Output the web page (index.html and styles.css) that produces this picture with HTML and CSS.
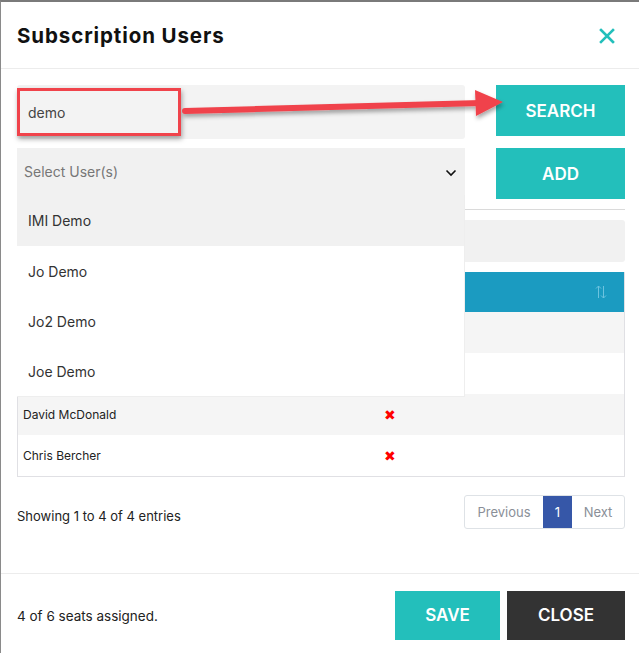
FILE: index.html
```html
<!DOCTYPE html>
<html>
<head>
<meta charset="utf-8">
<link rel="stylesheet" href="styles.css">
</head>
<body>
<div class="modal">
  <div class="modal-header">
    <h1 class="title">Subscription Users</h1>
    <svg class="close-x" width="16" height="16" viewBox="0 0 16 16"><path d="M2 2L14 14M14 2L2 14" stroke="#23bfbb" stroke-width="2.6" stroke-linecap="square"/></svg>
  </div>
  <div class="modal-body">
    <div class="row">
      <div class="input search-input"><span class="input-text">demo</span></div>
      <button class="btn teal">SEARCH</button>
    </div>
    <div class="row row2">
      <div class="select-wrap">
        <div class="input select-input">
          <span class="placeholder">Select User(s)</span>
          <svg class="chev" width="12" height="8" viewBox="0 0 12 8"><path d="M1.5 1.5L6 6L10.5 1.5" fill="none" stroke="#111" stroke-width="1.6"/></svg>
        </div>
        <ul class="dropdown">
          <li class="active">IMI Demo</li>
          <li>Jo Demo</li>
          <li>Jo2 Demo</li>
          <li>Joe Demo</li>
        </ul>
      </div>
      <button class="btn teal add">ADD</button>
    </div>
    <div class="divider"></div>
    <div class="filter-box"></div>
    <div class="table">
      <div class="thead">
        <span></span>
        <svg class="sort" width="12" height="14" viewBox="0 0 12 14"><path d="M3.5 1V13M1 3.5L3.5 1L6 3.5M8.5 1V13M6 10.5L8.5 13L11 10.5" fill="none" stroke="#6cc3df" stroke-width="1"/></svg>
      </div>
      <div class="tr odd"><span class="name"></span><span class="act"></span></div>
      <div class="tr"><span class="name"></span><span class="act"></span></div>
      <div class="tr odd"><span class="name">David McDonald</span><span class="act"><span class="rx">✖</span></span></div>
      <div class="tr"><span class="name">Chris Bercher</span><span class="act"><span class="rx">✖</span></span></div>
    </div>
    <div class="info-row">
      <span class="info">Showing 1 to 4 of 4 entries</span>
      <div class="pager">
        <span class="pg">Previous</span>
        <span class="pg current">1</span>
        <span class="pg">Next</span>
      </div>
    </div>
  </div>
  <div class="modal-footer">
    <span class="seats">4 of 6 seats assigned.</span>
    <div class="footer-btns">
      <button class="btn teal save">SAVE</button>
      <button class="btn dark close">CLOSE</button>
    </div>
  </div>

  <div class="highlight"></div>
  <svg class="arrow" width="340" height="40" viewBox="0 0 340 40">
    <defs>
      <filter id="sh" x="-10%" y="-50%" width="120%" height="250%">
        <feDropShadow dx="1" dy="3" stdDeviation="2" flood-color="#000" flood-opacity="0.35"/>
      </filter>
    </defs>
    <g filter="url(#sh)">
      <path d="M4 26L300 18" stroke="#f0434b" stroke-width="6" stroke-linecap="round"/>
      <path d="M294 5L322 17L295 31Z" fill="#f0434b"/>
    </g>
  </svg>
</div>
</body>
</html>
```

FILE: styles.css
```css
* { box-sizing: border-box; }
html, body { margin: 0; padding: 0; background: #fff; }
body {
  font-family: "Inter", "Open Sans", sans-serif;
  color: #222;
  width: 639px;
  height: 653px;
  overflow: hidden;
}
.modal {
  position: relative;
  width: 639px;
  height: 653px;
  border-top: 2px solid #7a7a7a;
  border-left: 1px solid #8a8a8a;
  background: #fff;
}
.modal-header {
  height: 67px;
  border-bottom: 1px solid #ececec;
  display: flex;
  align-items: center;
  justify-content: space-between;
  padding: 0 24px 0 16px;
}
.title {
  margin: 0;
  font-size: 20.5px;
  font-weight: 700;
  color: #111;
  letter-spacing: 0.9px;
  padding-top: 0;
}
.close-x { margin-top: 1px; }
.modal-body {
  padding: 16px 14px 0 16px;
}
.row {
  display: flex;
  gap: 31px;
  align-items: flex-start;
}
.row2 { margin-top: 9px; }
.input {
  width: 448px;
  background: #f3f3f3;
  border-radius: 3px;
  display: flex;
  align-items: center;
}
.search-input { height: 54px; padding-left: 11px; }
.input-text { font-size: 14px; color: #444; }
.select-wrap { position: relative; width: 448px; }
.select-input {
  height: 47px;
  background: #f1f1f1;
  padding: 0 8px 0 7px;
  justify-content: space-between;
  border-radius: 0;
}
.placeholder { font-size: 14px; color: #777; }
.chev { margin-top: 2px; }
.dropdown {
  position: absolute;
  left: 0;
  top: 47px;
  width: 448px;
  margin: 0;
  padding: 0;
  list-style: none;
  background: #fff;
  border-bottom: 1px solid #eee;
  border-right: 1px solid #eee;
  z-index: 5;
}
.dropdown li {
  height: 50px;
  display: flex;
  align-items: center;
  padding-left: 11px;
  font-size: 14px;
  color: #333;
}
.dropdown li.active { background: #f1f1f1; height: 51px; }
.btn {
  border: none;
  font-family: inherit;
  font-weight: 600;
  color: #fff;
  cursor: pointer;
}
.teal { background: #23bfbb; }
.dark { background: #333; }
.row .btn {
  width: 129px;
  height: 51px;
  font-size: 17px;
}
.divider {
  margin-top: 10px;
  height: 1px;
  background: #dadada;
}
.filter-box {
  margin-top: 10px;
  height: 42px;
  background: #f1f1f1;
  border-radius: 3px;
}
.table {
  margin-top: 10px;
  border: 1px solid #e0e0e4;
  border-top: none;
}
.thead {
  height: 40px;
  background: #1b9bc1;
  display: flex;
  align-items: center;
  justify-content: flex-end;
  padding-right: 17px;
}
.tr {
  height: 41px;
  display: flex;
  align-items: center;
  background: #fff;
}
.tr.odd { background: #f5f5f5; }
.name {
  width: 340px;
  padding-left: 5px;
  font-size: 12px;
  color: #222;
}
.act { flex: 1; display: flex; padding-left: 26px; }
.rx { color: #f00; font-size: 14px; line-height: 1; }
.info-row {
  margin-top: 18px;
  display: flex;
  justify-content: space-between;
  align-items: center;
}
.info { font-size: 13px; color: #222; margin-top: 7px; }
.pager {
  display: flex;
  height: 34px;
  border: 1px solid #dee2e6;
  border-radius: 3px;
  overflow: hidden;
}
.pg {
  display: flex;
  align-items: center;
  justify-content: center;
  font-size: 13px;
  color: #8a8f98;
  padding: 0 12px;
}
.pg:first-child { width: 78px; }
.pg.current { background: #3657a8; color: #fff; width: 29px; padding: 0; }
.pg:last-child { width: 52px; padding: 0; }
.modal-footer {
  position: absolute;
  left: 0;
  right: 0;
  top: 571px;
  height: 80px;
  border-top: 1px solid #ececec;
  display: flex;
  align-items: center;
  justify-content: space-between;
  padding: 0 14px 0 16px;
}
.seats { font-size: 13.5px; color: #222; margin-top: 4px; }
.footer-btns { display: flex; gap: 7px; margin-top: 3px; }
.footer-btns .btn { height: 49px; font-size: 17px; }
.save { width: 105px; }
.close { width: 118px; }
.highlight {
  position: absolute;
  left: 16px;
  top: 86px;
  width: 164px;
  height: 48px;
  border: 3px solid #f0434b;
  box-shadow: 1px 3px 5px rgba(0,0,0,0.35);
}
.arrow {
  position: absolute;
  left: 180px;
  top: 83px;
}
```
